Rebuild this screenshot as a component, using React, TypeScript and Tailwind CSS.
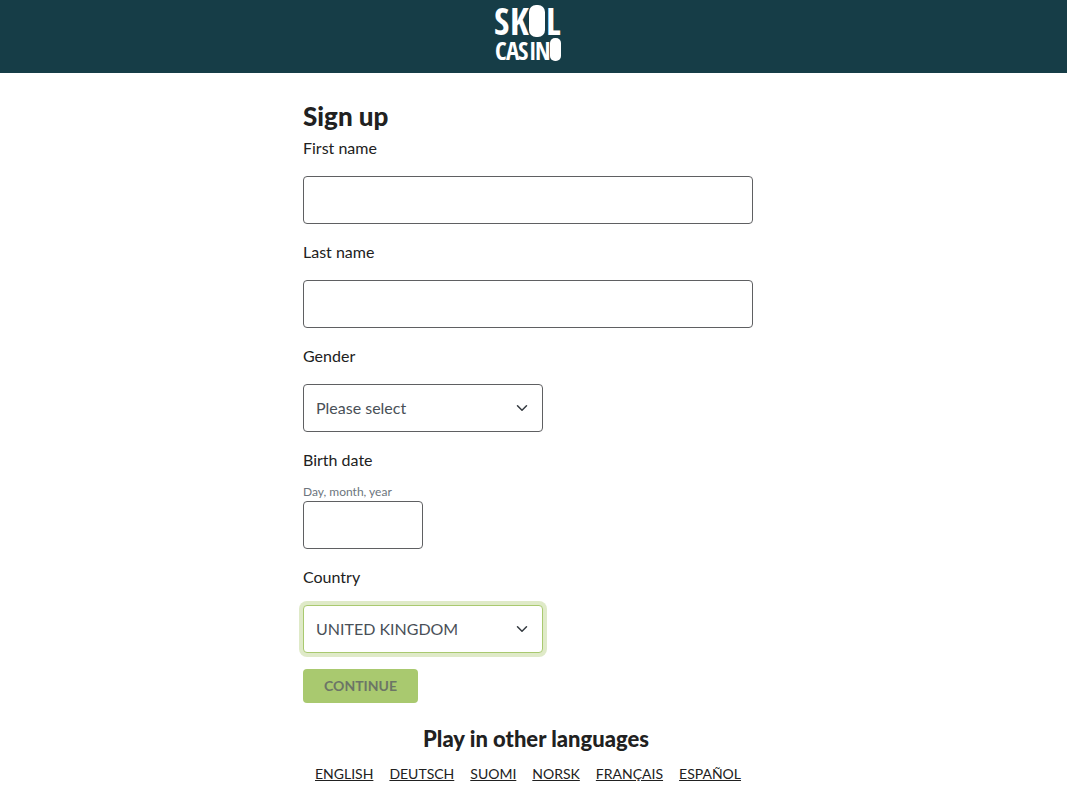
import { useState } from "react";
import type { ReactNode } from "react";
import { ChevronDown } from "lucide-react";

const languages = [
  { code: "en", name: "English" },
  { code: "de", name: "Deutsch" },
  { code: "fi", name: "Suomi" },
  { code: "no", name: "Norsk" },
  { code: "fr", name: "Français" },
  { code: "es", name: "Español" },
];

const inputClass =
  "block h-12 rounded border border-[#5f6062] bg-white px-3 text-base text-[#212121] outline-none focus:border-[#a9c96f] focus:ring-4 focus:ring-[#dfeac8]";

function Logo() {
  return (
    <svg
      width="66"
      height="58"
      viewBox="0 0 66 58"
      role="img"
      aria-label="Skol Casino"
      className="overflow-visible fill-white font-['Noto_Sans_ExtraCondensed','Open_Sans_Condensed','Roboto_Condensed',sans-serif] font-bold"
    >
      {/* the pills fill in the two O's */}
      <text x="-1 15 34 51" y="31" fontSize="37">
        SK<tspan fontSize="26">O</tspan>L
      </text>
      <text x="0 11 23 34 40 55" y="56" fontSize="25">
        CASIN<tspan fontSize="16">O</tspan>
      </text>
      <rect x="34" y="1" width="16" height="32" rx="7" />
      <rect x="55" y="34" width="11" height="23" rx="5" />
    </svg>
  );
}

function Field({ id, label, children }: { id: string; label: string; children: ReactNode }) {
  return (
    <div className="mb-4">
      <label htmlFor={id} className="mb-4 block text-base leading-6">
        {label}
      </label>
      {children}
    </div>
  );
}

type SelectProps = {
  id: string;
  value: string;
  options: string[];
  active?: boolean;
  onChange: (value: string) => void;
};

function Select({ id, value, options, active, onChange }: SelectProps) {
  return (
    <div className="relative w-60">
      <select
        id={id}
        value={value}
        onChange={(e) => onChange(e.target.value)}
        className={`h-12 w-full appearance-none rounded border bg-white pl-3 pr-9 text-base text-[#495057] outline-none ${
          active ? "border-[#a9c96f] ring-4 ring-[#dfeac8]" : "border-[#5f6062]"
        }`}
      >
        {options.map((o) => (
          <option key={o}>{o}</option>
        ))}
      </select>
      <ChevronDown
        size={18}
        strokeWidth={2}
        className="pointer-events-none absolute right-3 top-[15px] text-[#343a40]"
      />
    </div>
  );
}

export default function App() {
  const [gender, setGender] = useState("Please select");
  const [country, setCountry] = useState("UNITED KINGDOM");

  return (
    <div className="min-h-screen bg-white font-['Lato',sans-serif] text-[#212121]">
      <header className="flex h-[73px] justify-center bg-[#163d47] pr-[11px] pt-1">
        <a href="#home">
          <Logo />
        </a>
      </header>

      <main className="pr-[11px]">
        <div className="mx-auto max-w-[450px] pt-7">
          <form onSubmit={(e) => e.preventDefault()}>
            <h1 className="text-[26px] font-black leading-[31px]">Sign up</h1>

            <div className="pt-1">
              <Field id="first-name" label="First name">
                <input id="first-name" type="text" className={`w-full ${inputClass}`} />
              </Field>
              <Field id="last-name" label="Last name">
                <input id="last-name" type="text" className={`w-full ${inputClass}`} />
              </Field>
              <Field id="gender" label="Gender">
                <Select
                  id="gender"
                  value={gender}
                  options={["Please select", "Female", "Male"]}
                  onChange={setGender}
                />
              </Field>
              <Field id="birth-date" label="Birth date">
                <div className="-mt-1">
                  <small id="birth-hint" className="block text-xs leading-4 text-[#6c757d]">
                    Day, month, year
                  </small>
                  <input
                    id="birth-date"
                    type="text"
                    aria-describedby="birth-hint"
                    className={`mt-px w-[120px] ${inputClass}`}
                  />
                </div>
              </Field>
              <Field id="country" label="Country">
                <Select
                  id="country"
                  value={country}
                  options={["UNITED KINGDOM", "FINLAND", "GERMANY", "NORWAY"]}
                  active
                  onChange={setCountry}
                />
              </Field>
            </div>

            <button
              type="submit"
              className="h-[34px] w-[115px] rounded bg-[#a9c96f] text-sm font-bold uppercase text-[#6c7566]"
            >
              Continue
            </button>
          </form>

          <footer className="pt-5">
            <h2 className="pl-4 text-center text-[22px] font-black leading-[31px]">
              Play in other languages
            </h2>
            <ul className="flex flex-wrap justify-center gap-x-4 pt-2">
              {languages.map((l) => (
                <li key={l.code} className="text-sm leading-6">
                  <a href={`#${l.code}`} lang={l.code} className="uppercase underline">
                    {l.name}
                  </a>
                </li>
              ))}
            </ul>
          </footer>
        </div>
      </main>
    </div>
  );
}
